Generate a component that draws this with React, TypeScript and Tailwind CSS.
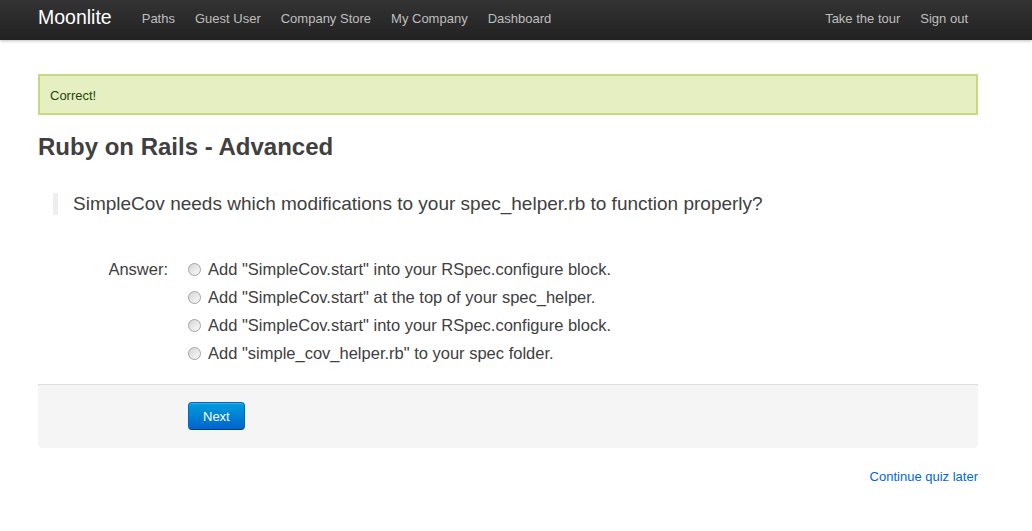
import React from 'react';

const navLinks = ['Paths', 'Guest User', 'Company Store', 'My Company', 'Dashboard'];

const answers = [
  'Add "SimpleCov.start" into your RSpec.configure block.',
  'Add "SimpleCov.start" at the top of your spec_helper.',
  'Add "SimpleCov.start" into your RSpec.configure block.',
  'Add "simple_cov_helper.rb" to your spec folder.',
];

const Radio: React.FC = () => (
  <span className="inline-block w-[13px] h-[13px] rounded-full border border-[#a3a3a3] bg-linear-to-br from-[#d6d6d6] to-[#f9f9f9] shrink-0" />
);

export default function App() {
  return (
    <div className="min-h-[531px] bg-white text-[#404040] text-[13px] leading-[18px]" style={{ fontFamily: '"Liberation Sans", Arial, sans-serif' }}>
      {/* Topbar */}
      <div className="h-10 bg-linear-to-b from-[#333333] to-[#222222] shadow-[0_1px_3px_rgba(0,0,0,0.25)]">
        <div className="w-[1016px]">
          <div className="mx-auto w-[940px] h-10 flex items-center justify-between">
            <div className="flex items-center">
              <a className="text-white text-[19.5px] leading-none pr-5 pb-[5px]">Moonlite</a>
              <nav className="flex">
                {navLinks.map((l) => (
                  <a key={l} className="px-[10px] text-[#bfbfbf] text-[13px] leading-10 pb-[2px]">
                    {l}
                  </a>
                ))}
              </nav>
            </div>
            <nav className="flex">
              <a className="px-[10px] text-[#bfbfbf] text-[13px] leading-10 pb-[2px]">Take the tour</a>
              <a className="pl-[10px] pr-[10px] text-[#bfbfbf] text-[13px] leading-10 pb-[2px]">Sign out</a>
            </nav>
          </div>
        </div>
      </div>

      <div className="w-[1016px]">
        <div className="mx-auto w-[940px] pt-[34px]">
          {/* Alert */}
          <div className="border-2 border-[#c6d880] bg-[#e6efc2] text-[#264409] px-[10px] pt-[11px] pb-[8px]">
            Correct!
          </div>

          <h2 className="mt-[14px] text-[24px] leading-[36px] font-bold text-[#404040]">Ruby on Rails - Advanced</h2>

          <blockquote className="mt-[28px] ml-[15px] border-l-[5px] border-[#eeeeee] pl-[15px]">
            <p className="text-[19px] leading-[22px] text-[#404040]">
              SimpleCov needs which modifications to your spec_helper.rb to function properly?
            </p>
          </blockquote>

          {/* Form */}
          <div className="mt-[40px] flex">
            <div className="w-[130px] h-[28px] flex items-center justify-end text-[16.5px] text-[#404040]">Answer:</div>
            <ul className="ml-[20px] flex flex-col">
              {answers.map((a, i) => (
                <li key={i} className="h-[28px] flex items-center gap-[7px] text-[16.5px] text-[#404040]">
                  <Radio />
                  <span>{a}</span>
                </li>
              ))}
            </ul>
          </div>

          <div className="mt-[17px] bg-[#f5f5f5] border-t border-[#dddddd] rounded-b-[4px] pt-[17px] pb-[18px] pl-[150px]">
            <button className="h-[28px] px-[14px] rounded-[4px] border border-[#0064cd] border-b-[#003f81] bg-linear-to-b from-[#049cdb] to-[#0064cd] text-white text-[13px] leading-none shadow-[inset_0_1px_0_rgba(255,255,255,0.2)]">
              Next
            </button>
          </div>

          <div className="mt-[20px] flex justify-end">
            <a className="text-[#0069d6] text-[13px] leading-[18px]">Continue quiz later</a>
          </div>
        </div>
      </div>
    </div>
  );
}
